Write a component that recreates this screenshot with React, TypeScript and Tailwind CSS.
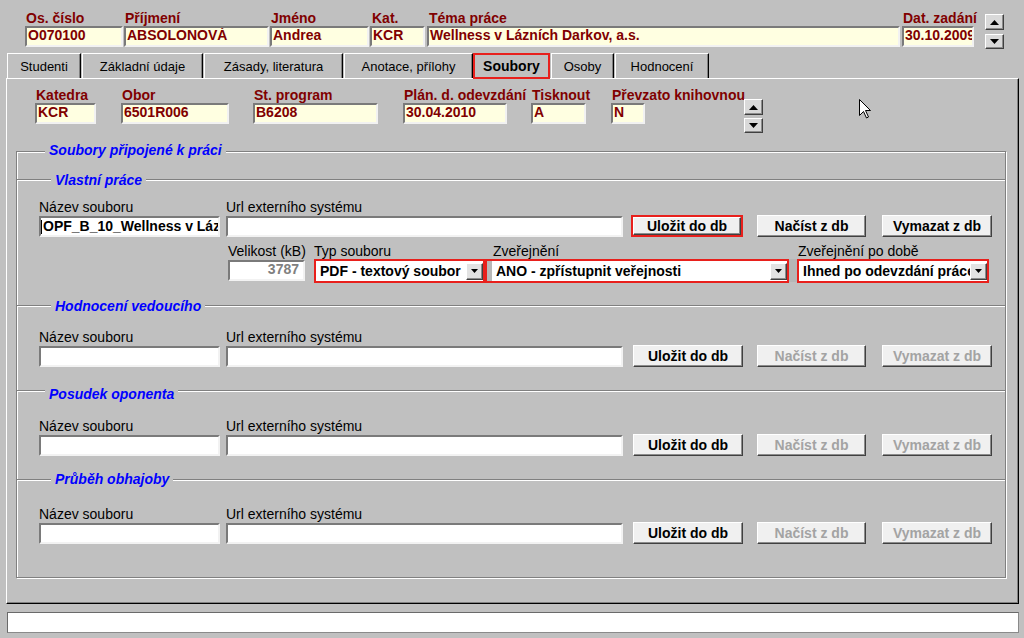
import React from 'react';

// Win32-style 3D edges
const sunken = 'border-2 border-t-[#7a7a7a] border-l-[#7a7a7a] border-b-[#f2f2f2] border-r-[#f2f2f2]';
const raised = 'border border-t-white border-l-white border-b-[#404040] border-r-[#404040] shadow-[inset_-1px_-1px_0_#8c8c8c]';
const RED = 'border-[#e8201c]';

const Tri: React.FC<{ up?: boolean; big?: boolean }> = ({ up, big }) => {
    const w = big ? 9 : 7;
    const h = big ? 5 : 4;
    return (
        <svg width={w} height={h} viewBox={`0 0 ${w} ${h}`}>
            <path d={up ? `M${w / 2} 0L${w} ${h}H0z` : `M0 0h${w}L${w / 2} ${h}z`} fill="#000" />
        </svg>
    );
};

const SpinBtn: React.FC<{ up?: boolean; h: string }> = ({ up, h }) => (
    <div className={`w-[19px] ${h} flex items-center justify-center bg-[#d9d9d9] ${raised}`}>
        <Tri up={up} big />
    </div>
);

const Spinner: React.FC<{ cls: string }> = ({ cls }) => (
    <div className={`flex flex-col shrink-0 ${cls}`}>
        <SpinBtn up h="h-[16px]" />
        <SpinBtn h="h-[15px]" />
    </div>
);

interface YFieldProps {
    label: string;
    value: string;
    w: string;
    ml?: string;
    lpad?: string;
}

// žlutá pole (hlavička + údaje práce)
const YField: React.FC<YFieldProps> = ({ label, value, w, ml = '', lpad = 'pl-[1px]' }) => (
    <div className={`flex flex-col shrink-0 ${w} ${ml}`}>
        <span className={`h-[16px] leading-[16px] text-[14px] font-bold text-[#800000] whitespace-nowrap ${lpad}`}>
            {label}
        </span>
        <div className={`h-[21px] ${sunken} bg-[#ffffe1] overflow-hidden whitespace-nowrap pl-[1px] text-[14px] leading-[15px] font-bold text-[#800000]`}>
            {value}
        </div>
    </div>
);

const Label: React.FC<{ children: React.ReactNode; pad?: string }> = ({ children, pad = '' }) => (
    <span className={`h-[16px] leading-[16px] text-[14px] text-black whitespace-nowrap ${pad}`}>{children}</span>
);

const WField: React.FC<{ label: string; w: string; ml?: string; value?: string; caret?: boolean }> = ({
    label,
    w,
    ml = '',
    value,
    caret
}) => (
    <div className={`flex flex-col shrink-0 ${w} ${ml}`}>
        <Label>{label}</Label>
        <div className={`h-[21px] mt-[1px] ${sunken} bg-white flex items-center overflow-hidden whitespace-nowrap text-[14px] leading-[15px] font-bold text-black`}>
            {caret && <span className="w-[1px] h-[14px] bg-black shrink-0" />}
            {value && <span className="pl-[1px]">{value}</span>}
        </div>
    </div>
);

const Btn: React.FC<{ label: string; w: string; ml: string; disabled?: boolean; hl?: boolean }> = ({
    label,
    w,
    ml,
    disabled,
    hl
}) => (
    <div className={`h-[22px] shrink-0 ${w} ${ml} ${hl ? `border-2 ${RED}` : ''}`}>
        <div
            className={`h-full w-full flex items-center justify-center bg-[#f0f0f0] ${raised} text-[14px] font-bold ${
                disabled ? 'text-[#a3a3a3]' : 'text-black'
            }`}
        >
            {label}
        </div>
    </div>
);

const DropBtn: React.FC = () => (
    <div className={`w-[17px] h-[17px] shrink-0 flex items-center justify-center bg-[#e2e2e2] ${raised}`}>
        <Tri />
    </div>
);

const Select: React.FC<{ text: string; w: string; strip?: boolean }> = ({ text, w, strip }) => (
    <div className={`${w} h-[24px] border-2 ${RED} bg-white flex items-center shrink-0`}>
        {strip && <div className="w-[5px] h-full bg-[#b8b8b8] shrink-0" />}
        <div className="flex-1 min-w-0 h-full flex items-center pl-[4px] overflow-hidden whitespace-nowrap text-[14px] font-bold text-black">
            {text}
        </div>
        <DropBtn />
    </div>
);

const Legend: React.FC<{ text: string; cls: string }> = ({ text, cls }) => (
    <span
        className={`self-start h-[16px] leading-[16px] px-[4px] bg-[#c0c0c0] text-[14px] font-bold italic text-[#0000ff] whitespace-nowrap ${cls}`}
    >
        {text}
    </span>
);

// jeden řádek: název souboru, url, tlačítka
const FileRow: React.FC<{ mt: string; first?: boolean }> = ({ mt, first }) => (
    <div className={`flex items-end pl-[22px] ${mt}`}>
        <WField
            label="Název souboru"
            w="w-[181px]"
            value={first ? 'OPF_B_10_Wellness v Lázních Darkov.pdf' : undefined}
            caret={first}
        />
        <WField label="Url externího systému" w="w-[397px]" ml="ml-[6px]" />
        {first ? (
            <Btn label="Uložit do db" w="w-[112px]" ml="ml-[8px]" hl />
        ) : (
            <Btn label="Uložit do db" w="w-[110px]" ml="ml-[10px]" />
        )}
        <Btn label="Načíst z db" w="w-[109px]" ml="ml-[14px]" disabled={!first} />
        <Btn label="Vymazat z db" w="w-[110px]" ml="ml-[16px]" disabled={!first} />
    </div>
);

const divider = 'border-t border-[#808080] shadow-[inset_0_1px_0_#fff]';

const tabs = [
    { t: 'Studenti', w: 'w-[74px]', ml: '' },
    { t: 'Základní údaje', w: 'w-[121px]', ml: 'ml-[1px]' },
    { t: 'Zásady, literatura', w: 'w-[139px]', ml: 'ml-[1px]' },
    { t: 'Anotace, přílohy', w: 'w-[129px]', ml: 'ml-[1px]' },
    { t: 'Soubory', w: 'w-[77px]', ml: '', active: true },
    { t: 'Osoby', w: 'w-[63px]', ml: 'ml-[1px]' },
    { t: 'Hodnocení', w: 'w-[94px]', ml: 'ml-[1px]' }
];

export default function App() {
    return (
        <div className="w-[1024px] h-[638px] bg-[#c0c0c0] overflow-hidden flex flex-col font-['Liberation_Sans',Arial,sans-serif] text-black">
            {/* hlavička */}
            <div className="flex items-start pt-[10px] pl-[25px] h-[53px] shrink-0">
                <YField label="Os. číslo" value="O070100" w="w-[98px]" />
                <YField label="Příjmení" value="ABSOLONOVÁ" w="w-[145px]" ml="ml-[1px]" />
                <YField label="Jméno" value="Andrea" w="w-[99px]" ml="ml-[1px]" />
                <YField label="Kat." value="KCR" w="w-[55px]" ml="ml-[1px]" lpad="pl-[2px]" />
                <YField label="Téma práce" value="Wellness v Lázních Darkov, a.s." w="w-[473px]" ml="ml-[2px]" lpad="pl-[2px]" />
                <YField label="Dat. zadání" value="30.10.2009" w="w-[72px]" ml="ml-[2px]" />
                <Spinner cls="ml-[11px] mt-[4px] gap-[4px]" />
            </div>

            {/* záložky */}
            <div className="flex items-start h-[25px] pl-[7px] shrink-0">
                {tabs.map((tab) =>
                    tab.active ? (
                        <div
                            key={tab.t}
                            className={`relative z-10 h-[26px] ${tab.w} ${tab.ml} border-2 ${RED} bg-[#c0c0c0] text-center pt-[4px] text-[14px] leading-[15px] font-bold`}
                        >
                            {tab.t}
                        </div>
                    ) : (
                        <div
                            key={tab.t}
                            className={`h-[25px] ${tab.w} ${tab.ml} border-t border-l border-t-white border-l-white border-r border-r-black shadow-[inset_-1px_0_0_#808080] text-center pt-[5px] text-[13px] leading-[15px] whitespace-nowrap`}
                        >
                            {tab.t}
                        </div>
                    )
                )}
            </div>

            {/* panel záložky Soubory */}
            <div className="relative ml-[6px] w-[1013px] h-[526px] shrink-0 border border-t-white border-l-white border-r-black border-b-black shadow-[inset_-1px_-1px_0_#808080]">
                <div className="flex items-start h-[45px] pt-[8px] pl-[28px]">
                    <YField label="Katedra" value="KCR" w="w-[61px]" />
                    <YField label="Obor" value="6501R006" w="w-[108px]" ml="ml-[25px]" />
                    <YField label="St. program" value="B6208" w="w-[125px]" ml="ml-[24px]" />
                    <YField label="Plán. d. odevzdání" value="30.04.2010" w="w-[104px]" ml="ml-[25px]" />
                    <YField label="Tisknout" value="A" w="w-[55px]" ml="ml-[24px]" />
                    <YField label="Převzato knihovnou" value="N" w="w-[34px]" ml="ml-[25px]" />
                    <Spinner cls="ml-[99px] mt-[12px] gap-[3px]" />
                </div>

                {/* Soubory připojené k práci */}
                <div className="ml-[9px] mt-[27px] w-[990px] h-[427px] flex flex-col border border-[#808080] shadow-[inset_1px_1px_0_#fff,1px_1px_0_#fff]">
                    <Legend text="Soubory připojené k práci" cls="ml-[28px] -mt-[10px]" />

                    <div className={`mt-[21px] h-[126px] shrink-0 flex flex-col ${divider}`}>
                        <Legend text="Vlastní práce" cls="ml-[34px] -mt-[8px]" />
                        <FileRow mt="mt-[11px]" first />
                        <div className="flex items-start mt-[6px] pl-[211px]">
                            <div className="flex flex-col w-[77px] shrink-0">
                                <Label>Velikost (kB)</Label>
                                <div className={`h-[21px] mt-[1px] ${sunken} bg-white text-right pr-[4px] text-[14px] leading-[15px] font-bold text-[#808080]`}>
                                    3787
                                </div>
                            </div>
                            <div className="flex flex-col ml-[9px] w-[171px] shrink-0">
                                <Label>Typ souboru</Label>
                                <Select text="PDF - textový soubor" w="w-[171px]" />
                            </div>
                            <div className="flex flex-col w-[304px] shrink-0">
                                <Label pad="pl-[8px]">Zveřejnění</Label>
                                <Select text="ANO - zpřístupnit veřejnosti" w="w-[304px]" strip />
                            </div>
                            <div className="w-[8px] h-[23px] mt-[16px] bg-[#b6b6b6] shrink-0" />
                            <div className="flex flex-col w-[192px] shrink-0">
                                <Label pad="pl-[1px]">Zveřejnění po době</Label>
                                <Select text="Ihned po odevzdání práce" w="w-[192px]" />
                            </div>
                        </div>
                    </div>

                    <div className={`h-[85px] shrink-0 flex flex-col ${divider}`}>
                        <Legend text="Hodnocení vedoucího" cls="ml-[34px] -mt-[8px]" />
                        <FileRow mt="mt-[15px]" />
                    </div>

                    <div className={`h-[89px] shrink-0 flex flex-col ${divider}`}>
                        <Legend text="Posudek oponenta" cls="ml-[28px] -mt-[5px]" />
                        <FileRow mt="mt-[16px]" />
                    </div>

                    <div className={`h-[98px] shrink-0 flex flex-col ${divider}`}>
                        <Legend text="Průběh obhajoby" cls="ml-[34px] -mt-[9px]" />
                        <FileRow mt="mt-[19px]" />
                    </div>
                </div>

                {/* kurzor myši */}
                <svg className="absolute left-[852px] top-[20px]" width="13" height="20" viewBox="0 0 13 20">
                    <path d="M0.5 0.5V16.5L4.5 12.5L7.5 19L9.5 18L6.5 11.5H11.5Z" fill="#fff" stroke="#000" strokeWidth="1" />
                </svg>
            </div>

            {/* stavový řádek */}
            <div className="ml-[7px] mt-[8px] w-[1012px] h-[21px] shrink-0 bg-white border border-[#8a8a8a] border-t-[#6a6a6a] border-l-[#6a6a6a]" />
        </div>
    );
}
